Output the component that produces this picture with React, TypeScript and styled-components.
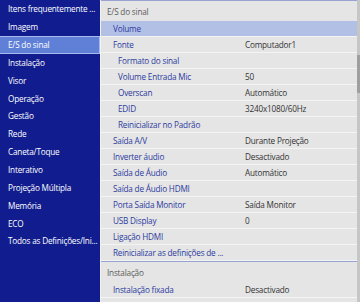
import React from 'react';
import styled, { createGlobalStyle } from 'styled-components';

const GlobalStyle = createGlobalStyle`
  html, body {
    margin: 0;
    padding: 0;
    background: #e5e5e5;
  }
  * {
    box-sizing: border-box;
  }
`;

const Screen = styled.div`
  display: flex;
  width: 360px;
  height: 302px;
  overflow: hidden;
  font-family: 'Open Sans', 'Noto Sans', sans-serif;
  font-size: 8.2px;
  letter-spacing: -0.2px;
`;

const Sidebar = styled.div`
  width: 100px;
  flex-shrink: 0;
  background: #111d8e;
  display: flex;
  flex-direction: column;
`;

const SideItem = styled.div<{ $active?: boolean }>`
  height: 17.85px;
  flex-shrink: 0;
  display: flex;
  align-items: center;
  padding-left: 8px;
  color: #ffffff;
  white-space: nowrap;
  background: ${(p) => (p.$active ? '#5f80d6' : 'transparent')};
  border: 1px solid ${(p) => (p.$active ? '#a6b8ec' : 'transparent')};
  border-left: none;
`;

const Content = styled.div`
  flex: 1;
  display: flex;
  background: #e5e5e5;
  border-left: 1px solid #f2f2f2;
`;

const List = styled.div`
  flex: 1;
  display: flex;
  flex-direction: column;
`;

const Group = styled.div`
  border-top: 1px solid #9aa2d4;
  flex-shrink: 0;
`;

const GroupHeader = styled.div`
  height: 20px;
  display: flex;
  align-items: center;
  padding-left: 6px;
  color: #5c5c5c;
`;

const Row = styled.div<{ $selected?: boolean }>`
  height: 16px;
  display: grid;
  grid-template-columns: 144px 1fr;
  align-items: center;
  border-bottom: 1px solid #f4f4f4;
  background: ${(p) => (p.$selected ? '#b3c0e6' : 'transparent')};
`;

const Label = styled.span<{ $level?: number }>`
  padding-left: ${(p) => (p.$level === 2 ? 17 : 12)}px;
  color: #2c3ba0;
  white-space: nowrap;
`;

const Value = styled.span`
  color: #333333;
  white-space: nowrap;
`;

const Scrollbar = styled.div`
  width: 3px;
  flex-shrink: 0;
  background: #c6c6c6;
  display: flex;
  flex-direction: column;
`;

const Thumb = styled.div`
  margin-top: 55px;
  height: 38px;
  background: #9f9f9f;
`;

const sideItems = [
  'Itens frequentemente ...',
  'Imagem',
  'E/S do sinal',
  'Instalação',
  'Visor',
  'Operação',
  'Gestão',
  'Rede',
  'Caneta/Toque',
  'Interativo',
  'Projeção Múltipla',
  'Memória',
  'ECO',
  'Todos as Definições/Ini...',
];

type Item = { label: string; value?: string; level?: number; selected?: boolean };

const signalItems: Item[] = [
  { label: 'Volume', selected: true },
  { label: 'Fonte', value: 'Computador1' },
  { label: 'Formato do sinal', level: 2 },
  { label: 'Volume Entrada Mic', value: '50', level: 2 },
  { label: 'Overscan', value: 'Automático', level: 2 },
  { label: 'EDID', value: '3240x1080/60Hz', level: 2 },
  { label: 'Reinicializar no Padrão', level: 2 },
  { label: 'Saída A/V', value: 'Durante Projeção' },
  { label: 'Inverter áudio', value: 'Desactivado' },
  { label: 'Saída de Áudio', value: 'Automático' },
  { label: 'Saída de Áudio HDMI' },
  { label: 'Porta Saída Monitor', value: 'Saída Monitor' },
  { label: 'USB Display', value: '0' },
  { label: 'Ligação HDMI' },
  { label: 'Reinicializar as definições de ...' },
];

const installItems: Item[] = [
  { label: 'Instalação fixada', value: 'Desactivado' },
  { label: 'Tipo de modelo' },
];

const renderRows = (items: Item[]) =>
  items.map((item) => (
    <Row key={item.label} $selected={item.selected}>
      <Label $level={item.level}>{item.label}</Label>
      <Value>{item.value}</Value>
    </Row>
  ));

const App: React.FC = () => {
  return (
    <>
      <GlobalStyle />
      <Screen>
        <Sidebar>
          {sideItems.map((name) => (
            <SideItem key={name} $active={name === 'E/S do sinal'}>
              {name}
            </SideItem>
          ))}
        </Sidebar>
        <Content>
          <List>
            <Group>
              <GroupHeader>E/S do sinal</GroupHeader>
              {renderRows(signalItems)}
            </Group>
            <Group>
              <GroupHeader>Instalação</GroupHeader>
              {renderRows(installItems)}
            </Group>
          </List>
          <Scrollbar>
            <Thumb />
          </Scrollbar>
        </Content>
      </Screen>
    </>
  );
};

export default App;
